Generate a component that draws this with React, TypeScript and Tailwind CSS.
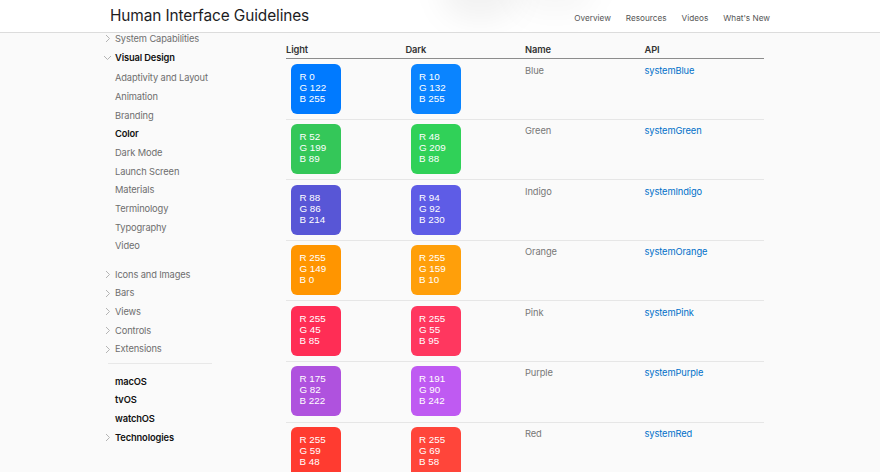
import React from 'react';

type Rgb = [number, number, number];

interface ColorRow {
  name: string;
  api: string;
  light: Rgb;
  dark: Rgb;
}

const rows: ColorRow[] = [
  { name: 'Blue', api: 'systemBlue', light: [0, 122, 255], dark: [10, 132, 255] },
  { name: 'Green', api: 'systemGreen', light: [52, 199, 89], dark: [48, 209, 88] },
  { name: 'Indigo', api: 'systemIndigo', light: [88, 86, 214], dark: [94, 92, 230] },
  { name: 'Orange', api: 'systemOrange', light: [255, 149, 0], dark: [255, 159, 10] },
  { name: 'Pink', api: 'systemPink', light: [255, 45, 85], dark: [255, 55, 95] },
  { name: 'Purple', api: 'systemPurple', light: [175, 82, 222], dark: [191, 90, 242] },
  { name: 'Red', api: 'systemRed', light: [255, 59, 48], dark: [255, 69, 58] },
];

function Chevron({ open }: { open?: boolean }) {
  return (
    <svg width="9" height="9" viewBox="0 0 9 9" className="shrink-0 text-[#b4b4b4]">
      {open ? (
        <path d="M1 3 L4.5 6.5 L8 3" fill="none" stroke="currentColor" strokeWidth="1" />
      ) : (
        <path d="M3 1 L6.5 4.5 L3 8" fill="none" stroke="currentColor" strokeWidth="1" />
      )}
    </svg>
  );
}

function NavItem({
  label,
  chevron,
  open,
  bold,
}: {
  label: string;
  chevron?: boolean;
  open?: boolean;
  bold?: boolean;
}) {
  return (
    <div className="flex h-[18.7px] items-center">
      <div className="flex w-[12px] justify-start">{chevron && <Chevron open={open} />}</div>
      <span
        className={`whitespace-nowrap text-[9.3px] tracking-[-0.12px] ${
          bold ? 'font-semibold text-[#111]' : 'text-[#6e6e6e]'
        }`}
      >
        {label}
      </span>
    </div>
  );
}

function Swatch({ rgb }: { rgb: Rgb }) {
  return (
    <div
      className="h-[50px] w-[50px] rounded-[6px] pl-[8.5px] pt-[7px] text-[9.8px] leading-[11px] text-white"
      style={{
        backgroundColor: `rgb(${rgb[0]}, ${rgb[1]}, ${rgb[2]})`,
        fontFamily: '"Liberation Sans", Arial, sans-serif',
      }}
    >
      <div>R {rgb[0]}</div>
      <div>G {rgb[1]}</div>
      <div>B {rgb[2]}</div>
    </div>
  );
}

export default function App() {
  return (
    <div
      className="relative h-[472px] w-full overflow-hidden bg-[#fafafa]"
      style={{ fontFamily: 'Inter, "Noto Sans", sans-serif' }}
    >
      <header className="relative h-[33px] overflow-hidden border-b border-[#dcdcdc] bg-white">
        <div className="pointer-events-none absolute left-[440px] top-[-40px] h-[60px] w-[80px] rounded-full bg-[#000]/[0.05] blur-[14px]" />
        <div className="pointer-events-none absolute left-[515px] top-[-38px] h-[52px] w-[80px] rounded-full bg-[#000]/[0.03] blur-[14px]" />
        <div className="relative mx-auto flex h-full w-[660px] items-center justify-between">
          <div className="text-[15.4px] tracking-[-0.1px] text-[#1d1d1f]">Human Interface Guidelines</div>
          <nav className="flex gap-[15px] pt-[4px] text-[8.2px] text-[#555]">
            <span>Overview</span>
            <span>Resources</span>
            <span>Videos</span>
            <span>What's New</span>
          </nav>
        </div>
      </header>

      <div className="flex pl-[103px]">
        <aside className="mt-[-3.5px] w-[183px] shrink-0">
          <NavItem label="System Capabilities" chevron />
          <NavItem label="Visual Design" chevron open bold />
          <div className="mt-[2px]">
            {['Adaptivity and Layout', 'Animation', 'Branding'].map((l) => (
              <NavItem key={l} label={l} />
            ))}
            <NavItem label="Color" bold />
            {['Dark Mode', 'Launch Screen', 'Materials', 'Terminology', 'Typography', 'Video'].map((l) => (
              <NavItem key={l} label={l} />
            ))}
          </div>
          <div className="mt-[9.5px]">
            {['Icons and Images', 'Bars', 'Views', 'Controls', 'Extensions'].map((l) => (
              <NavItem key={l} label={l} chevron />
            ))}
          </div>
          <div className="ml-[5px] mt-[4.5px] w-[104px] border-t border-[#e8e8e8]" />
          <div className="mt-[8px]">
            <NavItem label="macOS" bold />
            <NavItem label="tvOS" bold />
            <NavItem label="watchOS" bold />
            <NavItem label="Technologies" chevron bold />
          </div>
        </aside>

        <main className="w-[478px] pt-[10px]">
          <div className="grid grid-cols-4 border-b border-[#8c8c8c] pb-[1px] text-[9.3px] font-semibold leading-[14px] tracking-[-0.1px] text-[#333]">
            <div>Light</div>
            <div>Dark</div>
            <div>Name</div>
            <div>API</div>
          </div>
          {rows.map((r) => (
            <div key={r.name} className="grid h-[60.6px] grid-cols-4 border-b border-[#e6e6e6] pt-[4.5px]">
              <div className="pl-[5px]">
                <Swatch rgb={r.light} />
              </div>
              <div className="pl-[5px]">
                <Swatch rgb={r.dark} />
              </div>
              <div className="text-[9.3px] leading-[14px] tracking-[-0.1px] text-[#777]">{r.name}</div>
              <div className="text-[9.3px] leading-[14px] tracking-[-0.1px] text-[#0070c9]">{r.api}</div>
            </div>
          ))}
        </main>
      </div>
    </div>
  );
}
